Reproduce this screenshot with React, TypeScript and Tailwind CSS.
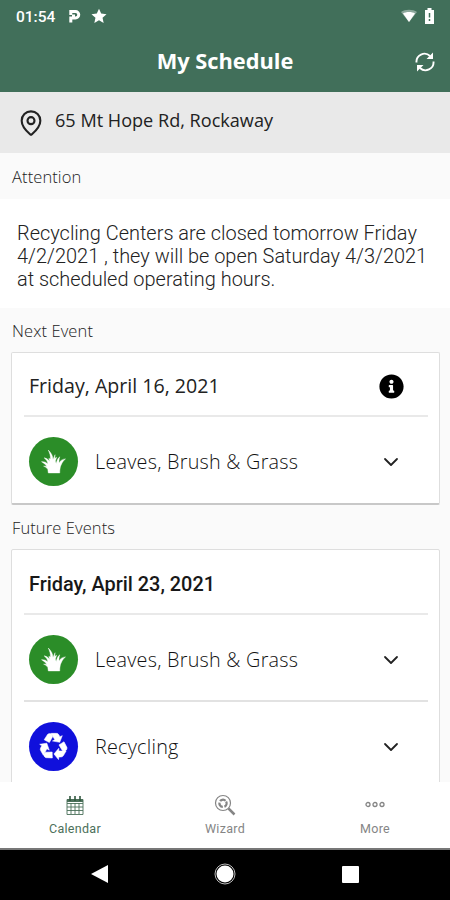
import { ChevronDown, MapPin } from "lucide-react";
import { FaInfoCircle } from "react-icons/fa";

function GrassIcon() {
  return (
    <svg viewBox="0 0 24 24" className="h-[25px] w-[25px]" fill="white" stroke="white" strokeWidth=".4" strokeLinejoin="round">
      <path d="M7 23 L6.500 19.500 C5.500 18 4.500 17.300 2.500 16.500 L5.500 16.500 C4 14.500 2.500 13.300 0.500 12.200 C3 12 5 12.500 6.500 14.500 C6.500 12 5 10.300 3 8.500 C6 9 7.200 10.500 8.300 12 L7.500 9 L9 9.500 C9.200 6.500 8.500 4.500 7 1 C10 4 11.300 6.500 11.500 10 L13.500 5.500 L13.200 9 L15 8 L13.800 11.500 L14.500 14 C15.500 11 16 9 18 7.500 C17.200 10 17.200 12 17.300 13.500 C18.500 11 20.500 9.800 23.500 9.500 C21 11.500 20 13.500 18.800 16.500 C18.300 18.500 18 20 18 23 Z" />
    </svg>
  );
}

function RecycleIcon() {
  return (
    <svg viewBox="-14 -14 28 28" className="h-[29px] w-[29px]" fill="white" stroke="white" strokeWidth=".5" strokeLinejoin="round">
      {[0, 120, 240].map((angle) => (
        <g key={angle} transform={`rotate(${angle})`}>
          <path d="M-9 -6.500 -5.800 -11.500 Q-5 -12.500 -3.300 -12.500 L-1.500 -11.800 -.8 -9.500 -4 -3.800Z" />
          <path d="M-2.300 -12.700 H2.800 Q4.300 -12.700 5 -11.500 L6.200 -9.500 8.500 -10.500 6 -4 -1 -5.300 1.200 -6.600Z" />
        </g>
      ))}
    </svg>
  );
}

function EventRow({ label, recycling = false }: { label: string; recycling?: boolean }) {
  return (
    <div className="flex h-[86px] items-center pl-[5px] pr-7 pt-[3px]">
      <span
        className={`flex h-[49px] w-[49px] items-center justify-center rounded-full ${
          recycling ? "bg-[#1010dc]" : "bg-[#2b8d28]"
        }`}
      >
        {recycling ? <RecycleIcon /> : <GrassIcon />}
      </span>
      <span className="ml-[17px] flex-1 text-[19.8px] font-light tracking-[0.25px] text-[#111]">{label}</span>
      <ChevronDown size={24} strokeWidth={1.8} className="-mr-[3px] text-[#222]" />
    </div>
  );
}

export default function App() {
  return (
    <div className="flex h-[900px] w-[450px] flex-col overflow-hidden bg-[#fafafa] font-['Open_Sans','Noto_Sans',sans-serif]">
      <header className="h-[92px] shrink-0 bg-[#416f5a] text-white">
        {/* Status bar */}
        <div className="flex h-8 items-center pl-4 pr-[15px]">
          <span className="pt-[3px] font-[Roboto,sans-serif] text-[15.5px] font-medium">01:54</span>
          <svg className="ml-3 h-4 w-4" viewBox="0 0 16 16" fill="none" stroke="white" strokeWidth="3">
            <path d="M3.800 14.500V8.500" />
            <path d="M3.800 7V3.500H8.500a3 3 0 0 1 0 6.500H6.500V6.500" />
          </svg>
          <svg className="ml-2 h-4 w-4" viewBox="0 0 24 24" fill="white">
            <path d="m12 1 3.300 7.400 8 .8-6 5.300 1.700 8-7-4.200-7 4.200 1.700-8-6-5.300 8-.8z" />
          </svg>
          <svg className="ml-auto h-4 w-4" viewBox="0 0 16 16" fill="white">
            <path d="M0 4C4 1 12 1 16 4L8 14Z" opacity=".4" />
            <path d="M2 5.500c3-2 9-2 12 0L8 14Z" />
          </svg>
          <svg className="ml-[7px] h-4 w-[11px]" viewBox="0 0 11 16">
            <path d="M1 2h2.500V0h4v2H10v14H1z" fill="white" />
            <path d="M5.500 5v4.500M5.500 11v2" stroke="#416f5a" strokeWidth="1.500" />
          </svg>
        </div>
        <div className="grid h-[60px] grid-cols-[1fr_auto_1fr] items-center px-[15px]">
          <h1 className="col-start-2 -mt-0.5 text-[21.8px] font-bold">My Schedule</h1>
          <svg className="h-5 w-5 justify-self-end" viewBox="0 0 20 20" fill="none" stroke="white" strokeWidth="1.900">
            <path d="M1.500 10.500A8 8 0 0 1 15 4M18.500 9.500A8 8 0 0 1 5 16" />
            <path d="M18 .5v6.500H11.500zM2 19.500v-6.500H8.500z" fill="white" stroke="none" />
          </svg>
        </div>
      </header>

      <div className="flex h-[61px] shrink-0 items-center bg-[#e9e9e9] pl-[17px] text-[18.1px] text-[#222]">
        <MapPin size={28} strokeWidth={1.8} />
        <span className="-mt-[3px] ml-[10px]">65 Mt Hope Rd, Rockaway</span>
      </div>

      <main className="min-h-0 flex-1 overflow-hidden">
        <h2 className="h-[46px] pl-3 text-[16.500px] font-light leading-[47px] tracking-[0.1px] text-[#222]">Attention</h2>
        <p className="h-[109px] bg-white pl-[17px] pt-[23px] font-[Roboto,sans-serif] text-[19.94px] font-light leading-[23px] text-[#222]">
          Recycling Centers are closed tomorrow Friday
          <br />
          4/2/2021 , they will be open Saturday 4/3/2021
          <br />
          at scheduled operating hours.
        </p>

        <h2 className="h-11 pl-3 text-[16.500px] font-light leading-[45px] tracking-[0.1px] text-[#222]">Next Event</h2>
        <section className="ml-[11px] mr-[10px] h-[153px] rounded-[2px] border border-b-2 border-[#dedede] border-b-[#c8c8c8] bg-white pl-3 pr-[11px]">
          <div className="flex h-[64px] items-center justify-between border-b-2 border-[#e9e9e9] pl-[5px] pr-[24px] pt-1">
            <h3 className="text-[19.6px] text-[#222]">Friday, April 16, 2021</h3>
            <FaInfoCircle size={25} className="text-black" />
          </div>
          <EventRow label="Leaves, Brush & Grass" />
        </section>

        <h2 className="h-11 pl-3 text-[16.500px] font-light leading-[45px] tracking-[0.1px] text-[#222]">Future Events</h2>
        <section className="ml-[11px] mr-[10px] h-[260px] rounded-[2px] border border-[#dedede] bg-white pl-3 pr-[11px]">
          <div className="flex h-[65px] items-center border-b-2 border-[#e9e9e9] pl-[5px] pt-[7px]">
            <h3 className="font-[Roboto,sans-serif] text-[19.9px] font-medium text-[#181818]">Friday, April 23, 2021</h3>
          </div>
          <div className="h-[87px] border-b-2 border-[#e2e2e2]">
            <EventRow label="Leaves, Brush & Grass" />
          </div>
          <EventRow label="Recycling" recycling />
        </section>
      </main>

      {/* Tab bar */}
      <nav className="grid h-[66px] shrink-0 grid-cols-3 bg-white text-center font-[Roboto,sans-serif] text-[12.5px] tracking-[0.3px] text-[#858585]">
        <div className="flex flex-col items-center pt-[14px] text-[#4b705a]">
          <svg width="18" height="19" viewBox="0 0 18 19" fill="none" stroke="currentColor">
            <path d="M1 3.500h16v15H1zM1 7.500h16M1 11h16M1 14.500h16M5 7v11M9 7v11M13 7v11" strokeWidth=".9" />
            <path d="M1 4.500h16" strokeWidth="3" />
            <path d="M4 0v5M9 0v5M14 0v5" stroke="#31573f" strokeWidth="1.600" />
          </svg>
          <span className="mt-[5px]">Calendar</span>
        </div>
        <div className="flex flex-col items-center pt-3">
          <svg width="22" height="22" viewBox="0 0 22 22" fill="none" stroke="currentColor">
            <circle cx="9" cy="9" r="7.500" strokeWidth="1.200" />
            <circle cx="9" cy="9.300" r="3.600" strokeWidth="2.300" strokeDasharray="6 1.540" transform="rotate(-30 9 9.300)" />
            <path d="m14.500 14.500 6 6" strokeWidth="2.500" />
          </svg>
          <span className="mt-1">Wizard</span>
        </div>
        <div className="flex flex-col items-center pt-[19px]">
          <svg width="20" height="7" viewBox="0 0 20 7" fill="none" stroke="currentColor" strokeWidth="1.300">
            <circle cx="3" cy="3.500" r="2" />
            <circle cx="10" cy="3.500" r="2" />
            <circle cx="17" cy="3.500" r="2" />
          </svg>
          <span className="mt-3">More</span>
        </div>
      </nav>

      {/* System navigation */}
      <div className="flex h-[52px] shrink-0 items-center justify-between border-t-2 border-[#777] bg-black px-[91px] pb-0.5">
        <svg width="17" height="20" viewBox="0 0 17 20"><path d="M0 10 17 1v18z" fill="white" /></svg>
        <svg width="22" height="22" viewBox="0 0 22 22">
          <circle cx="11" cy="11" r="8.500" fill="white" />
          <circle cx="11" cy="11" r="10" fill="none" stroke="#bbb" />
        </svg>
        <span className="h-[17px] w-[17px] rounded-[1px] bg-white" />
      </div>
    </div>
  );
}
